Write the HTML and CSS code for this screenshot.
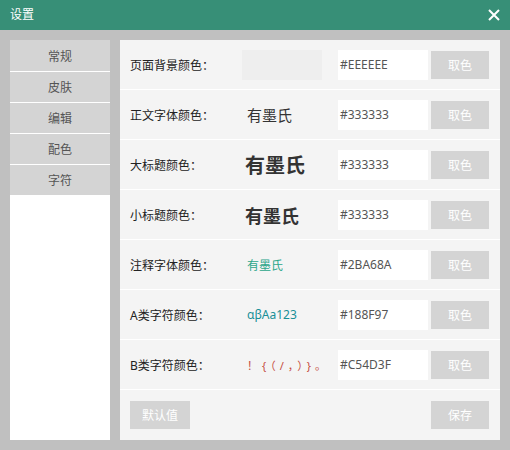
FILE: index.html
```html
<!DOCTYPE html>
<html lang="zh">
<head>
<meta charset="utf-8">
<title>设置</title>
<link rel="stylesheet" href="styles.css">
</head>
<body>
<div class="window">
  <header class="titlebar">
    <span class="title">设置</span>
    <svg class="close" width="12" height="12" viewBox="0 0 12 12"><path d="M1 1L11 11M11 1L1 11" stroke="#fff" stroke-width="2"/></svg>
  </header>
  <div class="body">
    <nav class="sidebar">
      <div class="tab">常规</div>
      <div class="tab">皮肤</div>
      <div class="tab">编辑</div>
      <div class="tab">配色</div>
      <div class="tab">字符</div>
    </nav>
    <main class="panel">
      <div class="row">
        <span class="label">页面背景颜色：</span>
        <span class="preview"><span class="swatch"></span></span>
        <span class="input">#EEEEEE</span>
        <span class="btn">取色</span>
      </div>
      <div class="row">
        <span class="label">正文字体颜色：</span>
        <span class="preview p-body">有墨氏</span>
        <span class="input">#333333</span>
        <span class="btn">取色</span>
      </div>
      <div class="row">
        <span class="label">大标题颜色：</span>
        <span class="preview p-h1">有墨氏</span>
        <span class="input">#333333</span>
        <span class="btn">取色</span>
      </div>
      <div class="row">
        <span class="label">小标题颜色：</span>
        <span class="preview p-h2">有墨氏</span>
        <span class="input">#333333</span>
        <span class="btn">取色</span>
      </div>
      <div class="row">
        <span class="label">注释字体颜色：</span>
        <span class="preview p-note">有墨氏</span>
        <span class="input">#2BA68A</span>
        <span class="btn">取色</span>
      </div>
      <div class="row">
        <span class="label">A类字符颜色：</span>
        <span class="preview p-a">αβAa123</span>
        <span class="input">#188F97</span>
        <span class="btn">取色</span>
      </div>
      <div class="row">
        <span class="label">B类字符颜色：</span>
        <span class="preview p-b">！{（/，）}。</span>
        <span class="input">#C54D3F</span>
        <span class="btn">取色</span>
      </div>
      <div class="footer">
        <span class="btn">默认值</span>
        <span class="btn">保存</span>
      </div>
    </main>
  </div>
</div>
</body>
</html>
```
FILE: styles.css
```css
* { box-sizing: border-box; }
html, body { margin: 0; padding: 0; }
body {
  width: 510px;
  height: 450px;
  background: #c0c0c0;
  font-family: "Noto Sans", "Noto Sans CJK SC", sans-serif;
  overflow: hidden;
}
.window { display: flex; flex-direction: column; height: 450px; }
.titlebar {
  height: 30px;
  background: #378f77;
  display: flex;
  align-items: center;
  justify-content: space-between;
  padding: 0 10px 0 10px;
  color: #fff;
}
.title { font-size: 12px; line-height: 1; }
.close { display: block; }
.body {
  display: flex;
  gap: 10px;
  padding: 10px 10px 10px 10px;
  height: 420px;
}
.sidebar {
  width: 100px;
  background: #fff;
  display: flex;
  flex-direction: column;
  gap: 1px;
}
.tab {
  height: 30px;
  background: #d4d4d4;
  color: #555;
  font-size: 12px;
  display: flex;
  align-items: center;
  justify-content: center;
}
.tab:first-child { height: 31px; }
.panel {
  width: 380px;
  background: #f4f4f4;
  display: flex;
  flex-direction: column;
}
.row {
  height: 50px;
  border-bottom: 1px solid #fff;
  display: flex;
  align-items: center;
  padding: 0 11px 0 10px;
}
.label { width: 112px; font-size: 12px; color: #222; }
.preview { width: 96px; color: #333; display: flex; align-items: center; }
.swatch { width: 80px; height: 30px; background: #eee; }
.p-body { font-size: 15px; padding-left: 5px; }
.p-h1 { font-size: 20px; font-weight: bold; padding-left: 3px; }
.p-h2 { font-size: 18px; font-weight: bold; padding-left: 3px; }
.p-note { font-size: 12px; color: #2ba68a; padding-left: 5px; }
.p-a { font-size: 12px; color: #188f97; padding-left: 5px; }
.p-b { font-size: 11px; color: #c54d3f; padding-left: 5px; letter-spacing: 4px; }
.input {
  width: 90px;
  height: 30px;
  background: #fff;
  font-size: 12px;
  color: #555;
  display: flex;
  align-items: center;
  padding-left: 2px;
}
.btn {
  width: 58px;
  height: 28px;
  margin-left: 3px;
  background: #d4d4d4;
  color: #fff;
  font-size: 12px;
  display: flex;
  align-items: center;
  justify-content: center;
}
.footer {
  flex: 1;
  display: flex;
  align-items: center;
  justify-content: space-between;
  padding: 0 11px 0 10px;
}
.footer .btn { margin-left: 0; }
.footer .btn:first-child { width: 60px; }
```
